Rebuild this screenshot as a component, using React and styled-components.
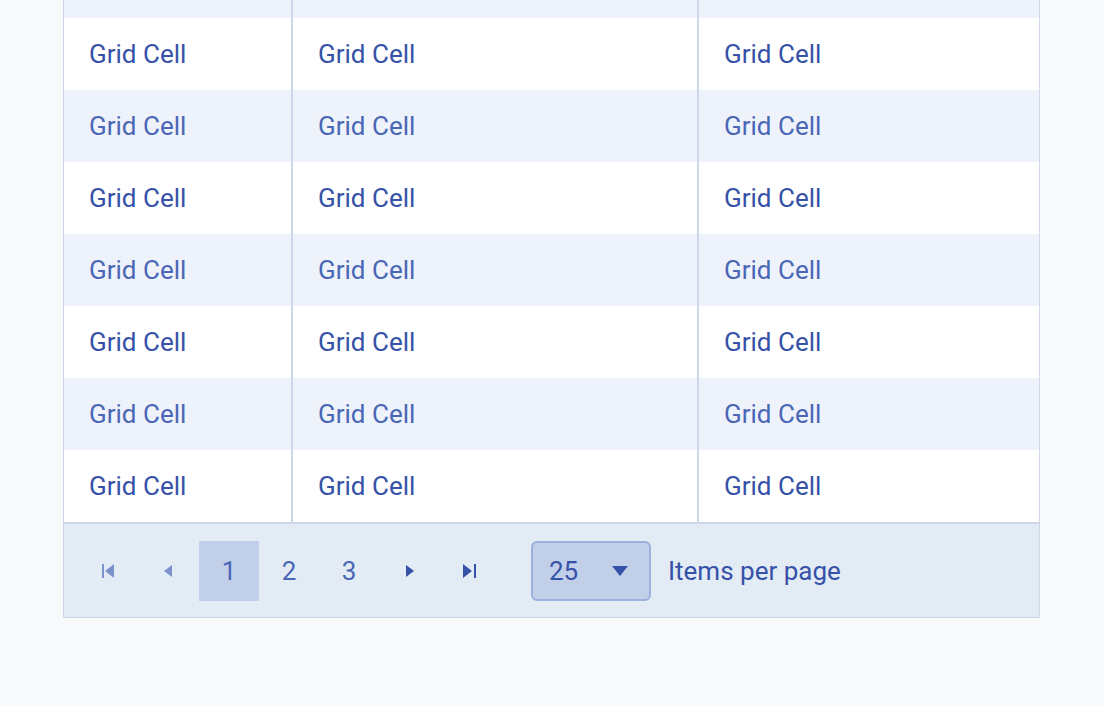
import React from "react";
import styled, { createGlobalStyle } from "styled-components";

const Global = createGlobalStyle`
  html, body { margin: 0; padding: 0; background: #f8f9fb; }
  body { font-family: Roboto, "Noto Sans", sans-serif; }
`;

const Page = styled.div`
  width: 1104px; height: 706px; overflow: hidden; box-sizing: border-box;
  padding: 0 64px 0 63px;
`;
const Grid = styled.div`
  margin-top: -54px;
  border: 1px solid #cfd8ea;
  border-top: none;
  background: #fff;
`;
const Row = styled.div`
  display: grid;
  grid-template-columns: 227px 406px 1fr;
  height: 72px;
  background: ${p => (p.$alt ? "#eef2fb" : "#fff")};
  color: ${p => (p.$alt ? "#4a67b5" : "#3552a8")};
`;
const Cell = styled.div`
  display: flex; align-items: center;
  padding-left: 25px;
  font-size: 26px;
  border-left: ${p => (p.$first ? "none" : "2px solid #cfd8ea")};
`;
const Pager = styled.div`
  height: 93px;
  border-top: 2px solid #cfd8ea;
  background: #e3ebf5;
  display: flex; align-items: center;
  padding-left: 15px;
`;
const Btn = styled.div`
  width: 60px; height: 60px;
  display: flex; align-items: center; justify-content: center;
  font-size: 26px;
  color: ${p => (p.$active ? "#4a67b5" : "#4a67b5")};
  background: ${p => (p.$active ? "#c2cfe8" : "transparent")};
`;
const Select = styled.div`
  margin-left: 32px;
  width: 116px; height: 56px;
  border: 2px solid #9bb0dc;
  border-radius: 6px;
  background: #c2cfe8;
  display: flex; align-items: center; justify-content: space-between;
  padding: 0 20px 0 16px; box-sizing: content-box; box-sizing: border-box;
  width: 120px; height: 60px;
  font-size: 26px; color: #3552a8;
`;
const Label = styled.div`
  margin-left: 17px; font-size: 26px; color: #3552a8;
`;

const Icon = ({ d, c }) => (
  <svg width="20" height="20" viewBox="0 0 20 20"><path d={d} fill={c} /></svg>
);

export default function App() {
  const rows = Array.from({ length: 8 }, (_, i) => i);
  return (
    <Page>
      <Global />
      <Grid>
        {rows.map(i => (
          <Row key={i} $alt={i % 2 === 0}>
            <Cell $first>{i === 0 ? "" : "Grid Cell"}</Cell>
            <Cell>{i === 0 ? "" : "Grid Cell"}</Cell>
            <Cell>{i === 0 ? "" : "Grid Cell"}</Cell>
          </Row>
        ))}
        <Pager>
          <Btn><Icon c="#7b92cc" d="M3 3h2v14H3zM6 10l9-7v14z" /></Btn>
          <Btn><Icon c="#7b92cc" d="M5 10l8-6v12z" /></Btn>
          <Btn $active>1</Btn>
          <Btn>2</Btn>
          <Btn>3</Btn>
          <Btn><Icon c="#3552a8" d="M7 4l8 6-8 6z" /></Btn>
          <Btn><Icon c="#3552a8" d="M4 3l9 7-9 7zM15 3h2v14h-2z" /></Btn>
          <Select>
            <span>25</span>
            <svg width="18" height="12" viewBox="0 0 18 12"><path d="M1 1h16L9 11z" fill="#3552a8" /></svg>
          </Select>
          <Label>Items per page</Label>
        </Pager>
      </Grid>
    </Page>
  );
}
